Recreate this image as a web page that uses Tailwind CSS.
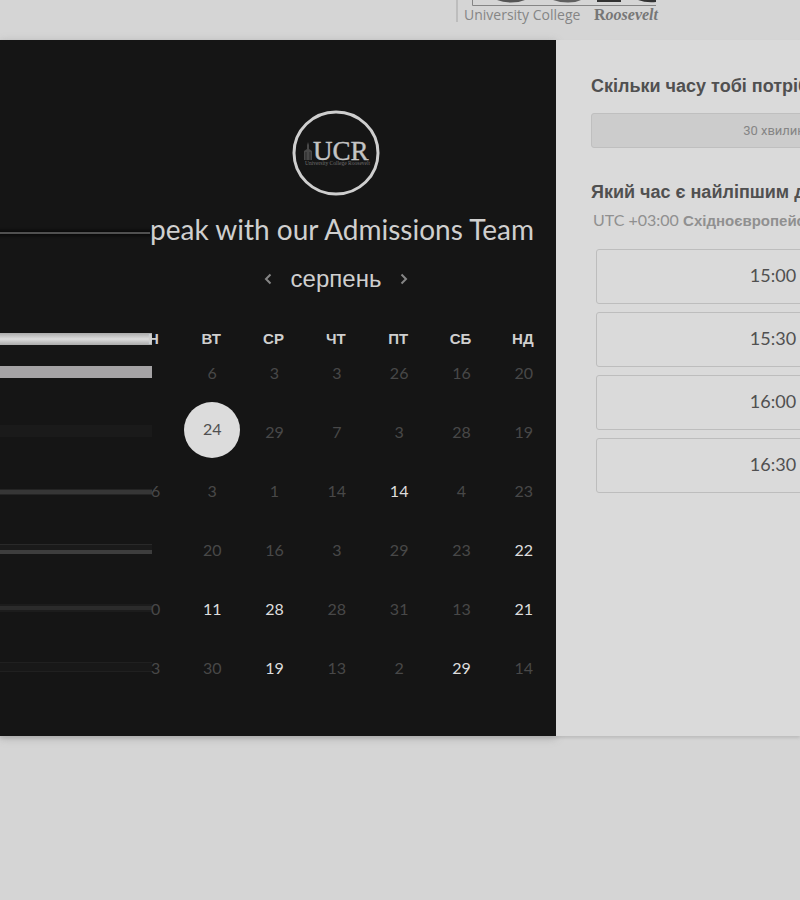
<!DOCTYPE html>
<html lang="uk">
<head>
<meta charset="utf-8">
<meta name="viewport" content="width=device-width, initial-scale=1">
<title>University College Roosevelt</title>
<script src="https://cdn.jsdelivr.net/npm/@tailwindcss/browser@4"></script>
</head>
<body class="min-h-screen overflow-x-hidden bg-[#d5d5d5] font-['Liberation_Sans',sans-serif]">
<header class="flex h-10 justify-end overflow-hidden pr-[142px]">
  <div class="h-[22px] border-l-2 border-[#bdbdbd] pl-1.5">
    <svg class="ml-2 block" width="186" height="7" viewBox="0 0 186 7" aria-hidden="true">
      <path d="M.5 0V5.500H184" fill="none" stroke="#858585"/>
      <path d="M25 0Q31 2.500 39 2.500T53 0Z" fill="#555"/>
      <path d="M81 0Q88 2.500 96 2.500T109 0Z" fill="#606060"/>
      <path d="M125 0H149V2H125ZM166 0H184V2Q174 3 166 0Z" fill="#333"/>
    </svg>
    <p class="flex items-baseline justify-between gap-1.5 whitespace-nowrap leading-4 text-[#858585]">
      <span class="font-['Open_Sans',sans-serif] text-sm leading-4">University College</span>
      <span class="font-['Liberation_Serif',serif] text-base font-bold leading-4 text-[#777]">R<i>oosevelt</i></span>
    </p>
  </div>
</header>
<main class="flex bg-[#dadada] shadow-[0_2px_3px_#bcbcbc]">
  <section class="w-[556px] shrink-0 bg-[#151515] pb-[39px] pt-[70px] text-[#cfcfcf] shadow-[0_2px_8px_#aaaaaa]" aria-label="Calendar">
    <div class="ml-[292px]">
      <svg class="block" width="88" height="86" viewBox="0 0 88 86" role="img" aria-label="UCR">
        <ellipse cx="44" cy="43" rx="42" ry="41" fill="none" stroke="#cecece" stroke-width="3"/>
        <path d="M12 50V41L15 39V35L16 32L17 35V39L20 41V50Z" fill="#484848"/>
        <path d="M14 42V50M18 42V50" stroke="#292929"/>
        <text x="21" y="50" fill="#c4c4c4" stroke="#c4c4c4" stroke-width=".4" font-family="Liberation Serif, serif" font-size="27">UCR</text>
        <text x="13" y="55" fill="#707070" font-family="Liberation Serif, serif" font-size="5.500">University College Roosevelt</text>
      </svg>
    </div>
    <div class="mt-[15px] flex h-9 items-center pr-[22px]">
      <div class="mt-2 h-0.5 flex-1 bg-[#505050] shadow-[0_0_3px_2px_#0b0b0b]"></div>
      <h1 class="whitespace-nowrap font-[Lato,sans-serif] text-[28px] leading-9">peak with our Admissions Team</h1>
    </div>
    <div class="ml-[262px] mt-4 flex h-8 w-[148px] items-center justify-between">
      <button type="button" aria-label="Попередній місяць" class="flex h-6 w-3 items-center justify-center text-[#858585]"><svg width="8" height="12" viewBox="0 0 8 12" fill="none" stroke="currentColor" stroke-width="2"><path d="M6.500 1.500L2 6L6.500 10.500"/></svg></button>
      <h2 class="text-2xl">серпень</h2>
      <button type="button" aria-label="Наступний місяць" class="flex h-6 w-3 items-center justify-center text-[#858585]"><svg width="8" height="12" viewBox="0 0 8 12" fill="none" stroke="currentColor" stroke-width="2"><path d="M1.500 1.500L6 6L1.500 10.500"/></svg></button>
    </div>
    <table class="mt-10 w-[554px] table-fixed border-collapse">
      <colgroup><col class="w-[152px]"><col class="w-7"><col><col><col><col><col><col></colgroup>
      <thead class="text-[15px] leading-2">
        <tr class="h-2 *:p-0">
          <td><div class="-my-0.5 h-3 bg-linear-to-b from-[#aaaaaa] via-[#dcdcdc] to-[#aaaaaa]"></div></td>
          <th class="text-left"><span class="-ml-1">Н</span></th><th>ВТ</th><th>СР</th><th>ЧТ</th><th>ПТ</th><th>СБ</th><th>НД</th>
        </tr>
      </thead>
      <tbody class="text-center font-[Lato,sans-serif] text-base leading-5 text-[#484848] [&_td]:h-[59px] [&_td]:p-0 [&_td+td+td]:pl-0.5 [&_button]:h-14 [&_button]:w-full">
        <tr><td><div class="-mt-0.5 h-3 bg-[#a5a3a5]"></div></td><td></td><td><button>6</button></td><td><button>3</button></td><td><button>3</button></td><td><button>26</button></td><td><button>16</button></td><td><button>20</button></td></tr>
        <tr><td><div class="-mt-0.5 h-3 bg-[#1a1a1a]"></div></td><td></td><td class="align-top"><button aria-pressed="true" class="block"><span class="mx-auto flex size-14 items-center justify-center rounded-full bg-[#dcdcdc] pb-0.5 text-[#505050]">24</span></button></td><td><button>29</button></td><td><button>7</button></td><td><button>3</button></td><td><button>28</button></td><td><button>19</button></td></tr>
        <tr><td><div class="mt-0.5 h-1.5 border-y border-[#242424] bg-[#363636]"></div></td><td><button class="-ml-0.5 text-left">6</button></td><td><button>3</button></td><td><button>1</button></td><td><button>14</button></td><td><button class="text-[#dddddd]">14</button></td><td><button>4</button></td><td><button>23</button></td></tr>
        <tr><td><div class="-mt-0.5 h-2.5 border-b-4 border-t border-b-[#3d3d3d] border-t-[#292929] bg-[#1a1a1a]"></div></td><td></td><td><button>20</button></td><td><button>16</button></td><td><button>3</button></td><td><button>29</button></td><td><button>23</button></td><td><button class="text-[#dddddd]">22</button></td></tr>
        <tr><td><div class="-mt-0.5 h-2 border-y-2 border-[#1c1c1c] bg-[#2b2b2b]"></div></td><td><button class="-ml-0.5 text-left">0</button></td><td><button class="text-[#dddddd]">11</button></td><td><button class="text-[#dddddd]">28</button></td><td><button>28</button></td><td><button>31</button></td><td><button>13</button></td><td><button class="text-[#dddddd]">21</button></td></tr>
        <tr><td><div class="-mt-0.5 h-2.5 border-y border-[#202020] bg-[#181818]"></div></td><td><button class="-ml-0.5 text-left">3</button></td><td><button>30</button></td><td><button class="text-[#dddddd]">19</button></td><td><button>13</button></td><td><button>2</button></td><td><button class="text-[#dddddd]">29</button></td><td><button>14</button></td></tr>
      </tbody>
    </table>
  </section>
  <section class="relative min-w-0 flex-1 overflow-hidden bg-[#dadada] pl-[35px] pt-[34px]">
    <div class="w-[366px] whitespace-nowrap text-[#505050]">
      <h2 class="text-lg font-bold leading-6">Скільки часу тобі потрібно?</h2>
      <button type="button" class="mt-[15px] block h-[35px] w-full rounded-[3px] border border-[#bfbfbf] bg-[#cccccc] font-[Roboto,sans-serif] text-[13px] text-[#858585]">30 хвилин</button>
      <h2 class="mt-8 text-lg font-bold leading-6">Який час є найліпшим для тебе?</h2>
      <p class="mt-1 pl-0.5 text-[15px] leading-6 text-[#909090]"><span class="font-[Lato,sans-serif] text-base leading-6">UTC +03:00</span> <b>Східноєвропейський час</b></p>
      <div class="ml-[5px] mt-4 flex flex-col gap-2 pr-[7px] font-[Lato,sans-serif] text-lg *:pb-1">
        <button type="button" class="h-[55px] rounded-[3px] border border-[#bdbdbd]">15:00</button>
        <button type="button" class="h-[55px] rounded-[3px] border border-[#bdbdbd]">15:30</button>
        <button type="button" class="h-[55px] rounded-[3px] border border-[#bdbdbd]">16:00</button>
        <button type="button" class="h-[55px] rounded-[3px] border border-[#bdbdbd]">16:30</button>
      </div>
    </div>
  </section>
</main>
</body>
</html>
